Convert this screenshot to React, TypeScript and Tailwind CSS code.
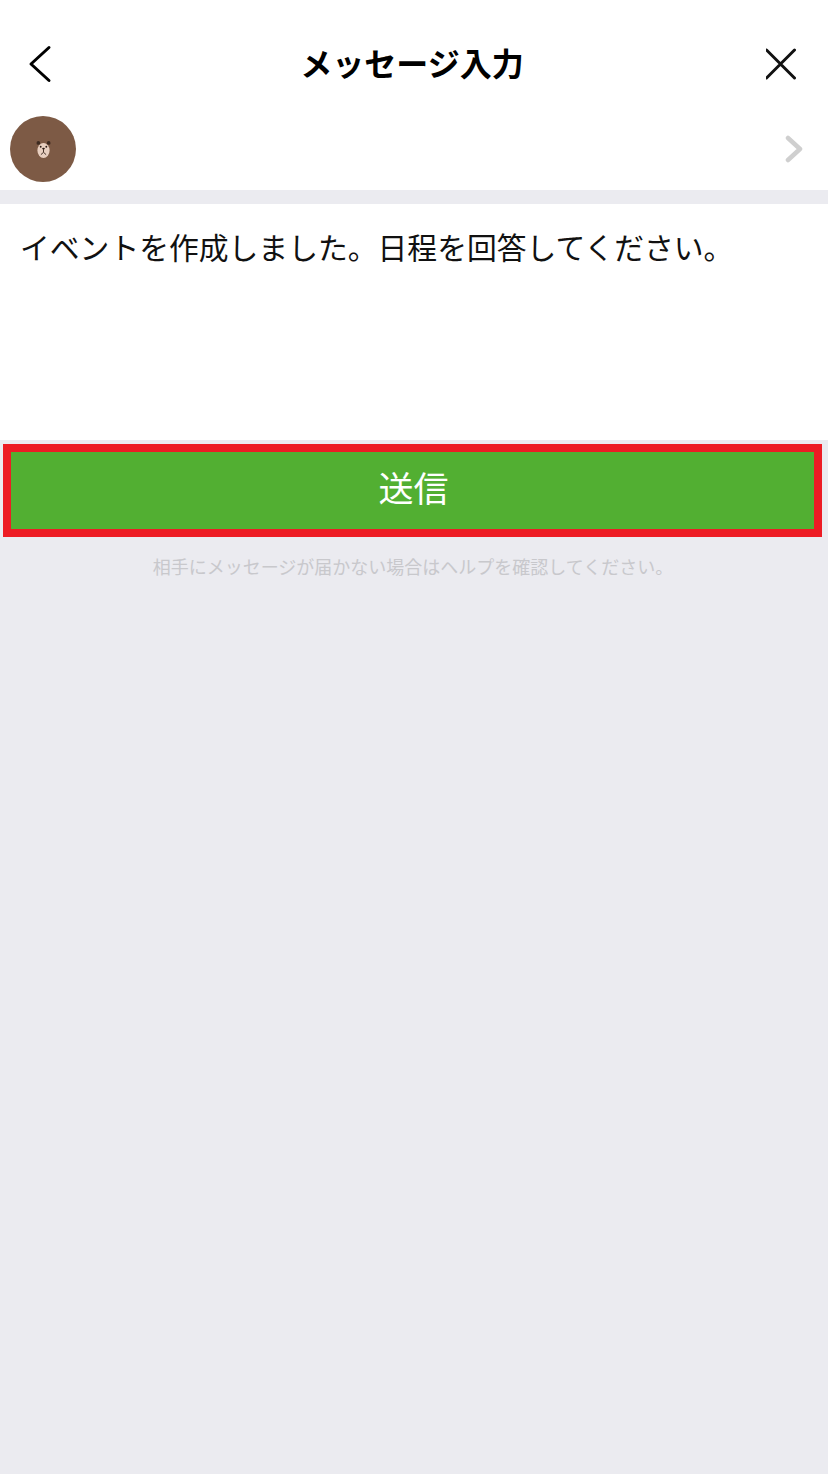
const font = "font-['Noto_Sans_CJK_JP','Noto_Sans',sans-serif]";

function BearAvatar() {
  return (
    <div className="flex h-[66px] w-[66px] items-center justify-center rounded-full bg-[#7d5a45]">
      <svg width="15" height="19" viewBox="0 0 16 20">
        <circle cx="2.5" cy="3" r="2" fill="#3d2a20" />
        <circle cx="13.5" cy="3" r="2" fill="#3d2a20" />
        <ellipse cx="8" cy="11" rx="6.5" ry="8" fill="#e8cfc0" />
        <circle cx="5" cy="7" r="1" fill="#2b1d16" />
        <circle cx="11" cy="7" r="1" fill="#2b1d16" />
        <ellipse cx="8" cy="9" rx="1.4" ry="1" fill="#2b1d16" />
        <path d="M8 9.5V13M8 13L5.2 15.5M8 13L10.8 15.5" stroke="#3d2a20" strokeWidth="1" fill="none" />
      </svg>
    </div>
  );
}

export default function App() {
  return (
    <div className={`flex h-[1474px] w-[828px] flex-col overflow-hidden bg-[#ebebf0] ${font}`}>
      {/* ヘッダー */}
      <div className="bg-white">
        <div className="flex h-[116px] items-start justify-between pl-[26px] pr-[30px] pt-[44px]">
          <svg className="w-[32px]" width="32" height="40" viewBox="0 0 32 40" fill="none" stroke="#000" strokeWidth="3" strokeLinecap="round" strokeLinejoin="round">
            <path d="M23 3.5L5 20L23 36.5" />
          </svg>
          <h1 className="-mt-[2px] text-[32px] font-bold leading-10 text-black">メッセージ入力</h1>
          <svg width="32" height="40" viewBox="0 0 32 40" fill="none" stroke="#111" strokeWidth="3" strokeLinecap="round">
            <path d="M0.5 6L28.5 34M28.5 6L0.5 34" />
          </svg>
        </div>
        <div className="flex h-[74px] items-start justify-between pl-[10px] pr-[24px]">
          <BearAvatar />
          <svg className="mt-[19px]" width="20" height="28" viewBox="0 0 20 28" fill="none" stroke="#cfcfcf" strokeWidth="4.5" strokeLinecap="round" strokeLinejoin="round">
            <path d="M4 3L16 14L4 25" />
          </svg>
        </div>
      </div>

      <div className="mt-[14px] h-[236px] bg-white px-[20px] pt-[21px]">
        <p className="text-[29.8px] leading-[42px] text-[#111]">イベントを作成しました。日程を回答してください。</p>
      </div>

      <div className="ml-[3px] mt-[4px] w-[819px] border-[8px] border-[#ed1c24]">
        <button className="flex h-[77px] w-full items-center justify-center bg-[#52af32] pb-[7px] pl-[2px] text-[35px] text-white">送信</button>
      </div>

      <p className="mt-[15px] pr-[2px] text-center text-[18px] leading-[28px] text-[#c8c8cc]">相手にメッセージが届かない場合はヘルプを確認してください。</p>
    </div>
  );
}
